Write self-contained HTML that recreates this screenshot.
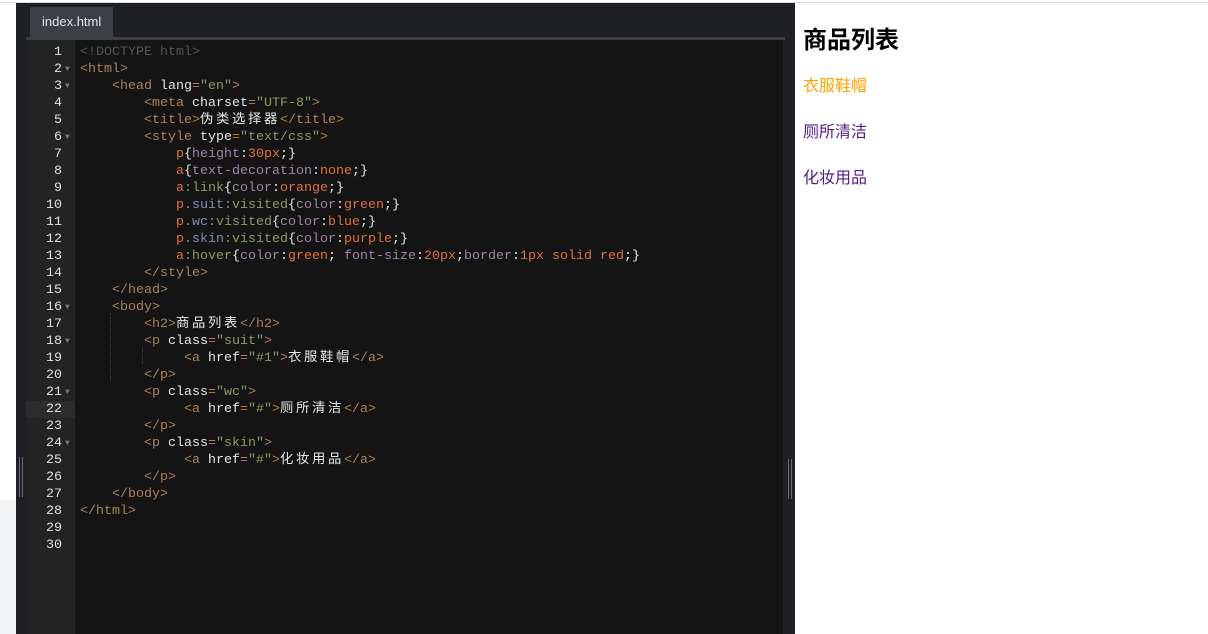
<!DOCTYPE html>
<html><head><meta charset="utf-8"><style>
*{margin:0;padding:0;box-sizing:border-box}
body{width:1208px;height:634px;position:relative;background:#fff;overflow:hidden;font-family:"Liberation Sans","Noto Sans CJK SC",sans-serif}
.topline{position:absolute;left:0;top:2px;width:1208px;height:1px;background:#dcdcdc}
.leftbot{position:absolute;left:0;top:500px;width:16px;height:134px;background:#f3f4f6}
.ed{position:absolute;left:16px;top:3px;width:779px;height:631px;background:#1f2023}
.tab{position:absolute;left:14px;top:4px;width:83px;height:30px;background:#3c3f45;color:#e6e6e6;font-size:13px;line-height:30px;padding-left:12px}
.bar{position:absolute;left:10px;top:34px;width:759px;height:3px;background:#3c3f45}
.gut{position:absolute;left:10px;top:37px;width:49px;height:594px;background:#232323}
.code{position:absolute;left:59px;top:37px;width:708px;height:594px;background:#141414}
.rz{position:absolute;width:1px;height:40px;background:#6a6d73}
.lines{position:absolute;left:10px;top:40.5px;width:757px;font-family:"Liberation Mono","Noto Sans CJK SC",monospace;font-size:13.33px;line-height:17px;color:#e6e6e6}
.ln{height:17px;white-space:pre;position:relative}
.n{display:inline-block;width:36px;text-align:right;color:#e0e0e0}
.ar{display:inline-block;width:8px;color:#777;font-size:8px;vertical-align:top;padding-left:3px}
.tx{position:absolute;left:54px;top:0}
.hl{background:#2c2c2c;width:49px;position:absolute;left:0;top:0;height:17px}
.t{color:#a9845a}.s{color:#8c9a63}.d{color:#555}.sel{color:#e0713d}.cl{color:#7e8db1}.ps{color:#8c9a63}.pr{color:#9d86a6}.v{color:#e0713d}
.z{letter-spacing:2.67px}
.guide{position:absolute;width:0;border-left:1px dotted #444}
h2{position:absolute;left:803px;top:27px;font-size:24px;font-weight:bold;line-height:28px}
.lk{position:absolute;left:803px;font-size:16px;line-height:20px}
</style></head><body>
<div class="topline"></div>
<div class="leftbot"></div>
<div class="ed">
<div class="tab">index.html</div>
<div class="bar"></div>
<div class="gut"></div>
<div class="code"></div>
<div class="rz" style="left:3px;top:454px"></div><div class="rz" style="left:6px;top:454px"></div>
<div class="rz" style="left:772px;top:456px"></div><div class="rz" style="left:775px;top:456px"></div>
<div class="guide" style="left:94px;top:310px;height:68px"></div>
<div class="guide" style="left:126px;top:344px;height:17px"></div>
<div class="lines">
<div class="ln"><span class="n">1</span><span class="tx"><span class="d">&lt;!DOCTYPE html&gt;</span></span></div>
<div class="ln"><span class="n">2</span><span class="ar">▼</span><span class="tx"><span class="t">&lt;html&gt;</span></span></div>
<div class="ln"><span class="n">3</span><span class="ar">▼</span><span class="tx">    <span class="t">&lt;head</span> lang<span class="t">=</span><span class="s">"en"</span><span class="t">&gt;</span></span></div>
<div class="ln"><span class="n">4</span><span class="tx">        <span class="t">&lt;meta</span> charset<span class="t">=</span><span class="s">"UTF-8"</span><span class="t">&gt;</span></span></div>
<div class="ln"><span class="n">5</span><span class="tx">        <span class="t">&lt;title&gt;</span><span class="z">伪类选择器</span><span class="t">&lt;/title&gt;</span></span></div>
<div class="ln"><span class="n">6</span><span class="ar">▼</span><span class="tx">        <span class="t">&lt;style</span> type<span class="t">=</span><span class="s">"text/css"</span><span class="t">&gt;</span></span></div>
<div class="ln"><span class="n">7</span><span class="tx">            <span class="sel">p</span>{<span class="pr">height</span>:<span class="v">30px</span>;}</span></div>
<div class="ln"><span class="n">8</span><span class="tx">            <span class="sel">a</span>{<span class="pr">text-decoration</span>:<span class="v">none</span>;}</span></div>
<div class="ln"><span class="n">9</span><span class="tx">            <span class="sel">a</span><span class="ps">:link</span>{<span class="pr">color</span>:<span class="v">orange</span>;}</span></div>
<div class="ln"><span class="n">10</span><span class="tx">            <span class="sel">p</span><span class="cl">.suit</span><span class="ps">:visited</span>{<span class="pr">color</span>:<span class="v">green</span>;}</span></div>
<div class="ln"><span class="n">11</span><span class="tx">            <span class="sel">p</span><span class="cl">.wc</span><span class="ps">:visited</span>{<span class="pr">color</span>:<span class="v">blue</span>;}</span></div>
<div class="ln"><span class="n">12</span><span class="tx">            <span class="sel">p</span><span class="cl">.skin</span><span class="ps">:visited</span>{<span class="pr">color</span>:<span class="v">purple</span>;}</span></div>
<div class="ln"><span class="n">13</span><span class="tx">            <span class="sel">a</span><span class="ps">:hover</span>{<span class="pr">color</span>:<span class="v">green</span>; <span class="pr">font-size</span>:<span class="v">20px</span>;<span class="pr">border</span>:<span class="v">1px solid red</span>;}</span></div>
<div class="ln"><span class="n">14</span><span class="tx">        <span class="t">&lt;/style&gt;</span></span></div>
<div class="ln"><span class="n">15</span><span class="tx">    <span class="t">&lt;/head&gt;</span></span></div>
<div class="ln"><span class="n">16</span><span class="ar">▼</span><span class="tx">    <span class="t">&lt;body&gt;</span></span></div>
<div class="ln"><span class="n">17</span><span class="tx">        <span class="t">&lt;h2&gt;</span><span class="z">商品列表</span><span class="t">&lt;/h2&gt;</span></span></div>
<div class="ln"><span class="n">18</span><span class="ar">▼</span><span class="tx">        <span class="t">&lt;p</span> class<span class="t">=</span><span class="s">"suit"</span><span class="t">&gt;</span></span></div>
<div class="ln"><span class="n">19</span><span class="tx">             <span class="t">&lt;a</span> href<span class="t">=</span><span class="s">"#1"</span><span class="t">&gt;</span><span class="z">衣服鞋帽</span><span class="t">&lt;/a&gt;</span></span></div>
<div class="ln"><span class="n">20</span><span class="tx">        <span class="t">&lt;/p&gt;</span></span></div>
<div class="ln"><span class="n">21</span><span class="ar">▼</span><span class="tx">        <span class="t">&lt;p</span> class<span class="t">=</span><span class="s">"wc"</span><span class="t">&gt;</span></span></div>
<div class="ln"><span class="hl"></span><span class="n" style="position:relative">22</span><span class="tx">             <span class="t">&lt;a</span> href<span class="t">=</span><span class="s">"#"</span><span class="t">&gt;</span><span class="z">厕所清洁</span><span class="t">&lt;/a&gt;</span></span></div>
<div class="ln"><span class="n">23</span><span class="tx">        <span class="t">&lt;/p&gt;</span></span></div>
<div class="ln"><span class="n">24</span><span class="ar">▼</span><span class="tx">        <span class="t">&lt;p</span> class<span class="t">=</span><span class="s">"skin"</span><span class="t">&gt;</span></span></div>
<div class="ln"><span class="n">25</span><span class="tx">             <span class="t">&lt;a</span> href<span class="t">=</span><span class="s">"#"</span><span class="t">&gt;</span><span class="z">化妆用品</span><span class="t">&lt;/a&gt;</span></span></div>
<div class="ln"><span class="n">26</span><span class="tx">        <span class="t">&lt;/p&gt;</span></span></div>
<div class="ln"><span class="n">27</span><span class="tx">    <span class="t">&lt;/body&gt;</span></span></div>
<div class="ln"><span class="n">28</span><span class="tx"><span class="t">&lt;/html&gt;</span></span></div>
<div class="ln"><span class="n">29</span></div>
<div class="ln"><span class="n">30</span></div>
</div>
</div>
<h2>商品列表</h2>
<div class="lk" style="top:77px;color:#ffa500">衣服鞋帽</div>
<div class="lk" style="top:123px;color:#551a8b">厕所清洁</div>
<div class="lk" style="top:169px;color:#551a8b">化妆用品</div>
</body></html>
